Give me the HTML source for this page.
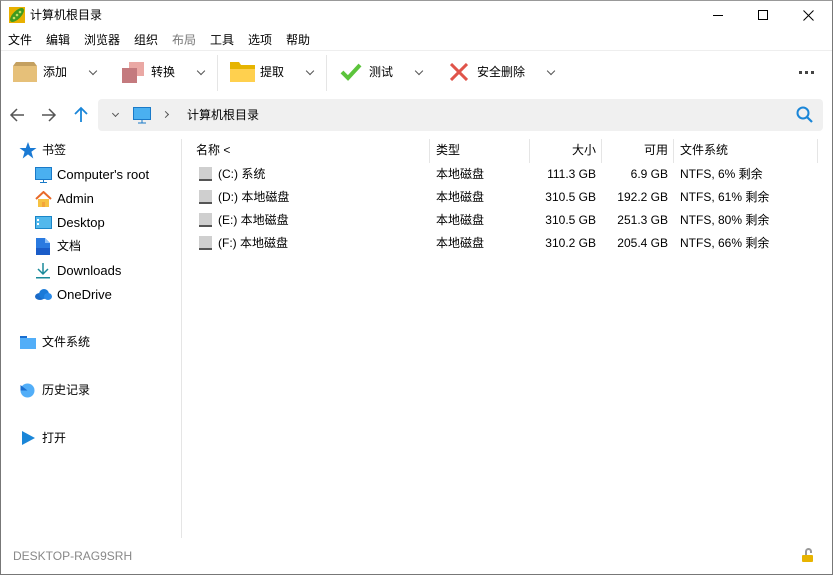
<!DOCTYPE html>
<html><head><meta charset="utf-8"><style>
*{margin:0;padding:0;box-sizing:border-box}
body{width:833px;height:575px;overflow:hidden;background:#fff;font-family:"Liberation Sans","Noto Sans CJK SC",sans-serif;font-size:12px;color:#000;position:relative}
.a{position:absolute;white-space:nowrap;line-height:17px}
.frame{position:absolute;left:0;top:0;width:833px;height:575px;border:1px solid #777;border-top-color:#999;pointer-events:none}
.sep{position:absolute;width:1px;background:#e5e5e5}
.chev{position:absolute;width:6px;height:6px;border-right:1.3px solid #555;border-bottom:1.3px solid #555;transform:rotate(45deg)}
.r{text-align:right}
</style></head><body>
<svg class="a" style="left:9px;top:7px" width="16" height="16"><rect width="16" height="16" fill="#e8b000"/><ellipse cx="8" cy="8" rx="9" ry="4" transform="rotate(-45 8 8)" fill="#3f9a1f"/><circle cx="5" cy="11" r="1.3" fill="#c8e060"/><circle cx="8" cy="8" r="1.3" fill="#c8e060"/><circle cx="11" cy="5" r="1.3" fill="#c8e060"/></svg>
<div class="a" style="left:30px;top:7px">计算机根目录</div>
<div class="a" style="left:713px;top:15px;width:10px;height:1px;background:#000"></div>
<div class="a" style="left:758px;top:10px;width:10px;height:10px;border:1px solid #000"></div>
<svg class="a" style="left:803px;top:10px" width="11" height="11"><path d="M0.5 0.5L10.5 10.5M10.5 0.5L0.5 10.5" stroke="#000" stroke-width="1"/></svg>
<div class="a" style="left:8px;top:32px">文件</div>
<div class="a" style="left:46px;top:32px">编辑</div>
<div class="a" style="left:84px;top:32px">浏览器</div>
<div class="a" style="left:134px;top:32px">组织</div>
<div class="a" style="left:172px;top:32px;color:#777">布局</div>
<div class="a" style="left:210px;top:32px">工具</div>
<div class="a" style="left:248px;top:32px">选项</div>
<div class="a" style="left:286px;top:32px">帮助</div>
<div class="a" style="left:1px;top:50px;width:831px;height:1px;background:#eee"></div>
<svg class="a" style="left:13px;top:62px" width="24" height="20"><path d="M0 4L3 0H21L24 4Z" fill="#c4a060"/><rect y="4" width="24" height="16" fill="#e6c079"/></svg>
<div class="a" style="left:43px;top:64px">添加</div>
<div class="chev" style="left:90px;top:68px"></div>
<div class="a" style="left:129px;top:62px;width:15px;height:14px;background:#eaa8a4"></div>
<div class="a" style="left:122px;top:68px;width:15px;height:15px;background:#c47a7e"></div>
<div class="a" style="left:151px;top:64px">转换</div>
<div class="chev" style="left:198px;top:68px"></div>
<div class="sep" style="left:217px;top:55px;height:36px"></div>
<svg class="a" style="left:230px;top:62px" width="25" height="20"><path d="M0 0H9L11 3H25V20H0Z" fill="#e6b400"/><rect y="7" width="25" height="13" fill="#ffd04e"/></svg>
<div class="a" style="left:260px;top:64px">提取</div>
<div class="chev" style="left:307px;top:68px"></div>
<div class="sep" style="left:326px;top:55px;height:36px"></div>
<svg class="a" style="left:340px;top:63px" width="22" height="18"><path d="M2 9L8 15L20 2" stroke="#5cc43c" stroke-width="4" fill="none"/></svg>
<div class="a" style="left:369px;top:64px">测试</div>
<div class="chev" style="left:416px;top:68px"></div>
<svg class="a" style="left:450px;top:63px" width="18" height="18"><path d="M1 1L17 17M17 1L1 17" stroke="#e0544a" stroke-width="3"/></svg>
<div class="a" style="left:477px;top:64px">安全删除</div>
<div class="chev" style="left:548px;top:68px"></div>
<svg class="a" style="left:799px;top:71px" width="17" height="4"><rect x="0" y="0" width="3" height="3" fill="#444"/><rect x="6" y="0" width="3" height="3" fill="#444"/><rect x="12" y="0" width="3" height="3" fill="#444"/></svg>
<svg class="a" style="left:9px;top:107px" width="16" height="16"><path d="M15 8H2M8 2L2 8L8 14" stroke="#555" stroke-width="1.5" fill="none"/></svg>
<svg class="a" style="left:41px;top:107px" width="16" height="16"><path d="M1 8H14M8 2L14 8L8 14" stroke="#555" stroke-width="1.5" fill="none"/></svg>
<svg class="a" style="left:73px;top:106px" width="16" height="17"><path d="M8 16V2M2 8L8 2L14 8" stroke="#1a86d8" stroke-width="1.8" fill="none"/></svg>
<div class="a" style="left:98px;top:99px;width:725px;height:32px;background:#f0f0f0;border-radius:4px"></div>
<div class="chev" style="left:113px;top:111px;width:5px;height:5px"></div>
<svg class="a" style="left:133px;top:107px" width="18" height="17"><rect x="0.5" y="0.5" width="17" height="12" fill="#4ab0f0" stroke="#1a7ac8"/><path d="M9 13V16M5 16H13" stroke="#1a7ac8"/></svg>
<div class="chev" style="left:163px;top:112px;width:5px;height:5px;transform:rotate(-45deg)"></div>
<div class="a" style="left:187px;top:107px">计算机根目录</div>
<svg class="a" style="left:796px;top:106px" width="18" height="18"><circle cx="7" cy="7" r="5.5" stroke="#1a86d8" stroke-width="2" fill="none"/><path d="M11 11L16 16" stroke="#1a86d8" stroke-width="2.2"/></svg>
<svg class="a" style="left:19px;top:142px" width="18" height="17"><path d="M9 0L11.2 6H17.5L12.4 9.8L14.3 16.5L9 12.4L3.7 16.5L5.6 9.8L0.5 6H6.8Z" fill="#1a7ad4"/></svg>
<div class="a" style="left:42px;top:142px">书签</div>
<svg class="a" style="left:35px;top:167px" width="17" height="16"><rect x="0.5" y="0.5" width="16" height="12" fill="#4ab0f0" stroke="#1a7ac8"/><path d="M8.5 13V15M5 15.5H12" stroke="#1a7ac8"/></svg>
<div class="a" style="left:57px;top:166px;font-size:13px">Computer's root</div>
<svg class="a" style="left:35px;top:191px" width="17" height="16"><path d="M1 8L8.5 1L16 8" stroke="#e86a2a" stroke-width="2" fill="none"/><rect x="3" y="8" width="11" height="8" fill="#f6c242"/><rect x="7" y="11" width="3" height="5" fill="#f3a43a"/></svg>
<div class="a" style="left:57px;top:190px;font-size:13px">Admin</div>
<svg class="a" style="left:35px;top:216px" width="17" height="13"><rect width="17" height="13" fill="#1a86c8"/><rect x="1" y="1" width="15" height="11" fill="#52b8ec"/><rect x="2" y="3" width="2" height="2" fill="#fff"/><rect x="2" y="7" width="2" height="2" fill="#fff"/></svg>
<div class="a" style="left:57px;top:214px;font-size:13px">Desktop</div>
<svg class="a" style="left:36px;top:238px" width="14" height="17"><path d="M0 0H9L14 5V17H0Z" fill="#2a7ae0"/><path d="M9 0V5H14" fill="#8cc0f8"/><rect y="10" width="14" height="7" fill="#1a5cc8"/></svg>
<div class="a" style="left:57px;top:238px">文档</div>
<svg class="a" style="left:36px;top:263px" width="14" height="16"><path d="M7 0V10M2 6L7 11L12 6" stroke="#1a8a9a" stroke-width="1.5" fill="none"/><rect y="14" width="14" height="1.5" fill="#1a8a9a"/></svg>
<div class="a" style="left:57px;top:262px;font-size:13px">Downloads</div>
<svg class="a" style="left:35px;top:289px" width="17" height="11"><ellipse cx="5" cy="7.5" rx="5" ry="3.5" fill="#1a6ac8"/><ellipse cx="9" cy="5" rx="5" ry="5" fill="#1a7ad8"/><ellipse cx="13" cy="7.5" rx="4" ry="3.5" fill="#2a8ae8"/></svg>
<div class="a" style="left:57px;top:286px;font-size:13px">OneDrive</div>
<svg class="a" style="left:20px;top:336px" width="16" height="13"><rect width="7" height="3" fill="#1a6ed0"/><rect y="2" width="16" height="11" fill="#52aef8"/></svg>
<div class="a" style="left:42px;top:334px">文件系统</div>
<svg class="a" style="left:20px;top:383px" width="15" height="15"><circle cx="7.5" cy="7.5" r="7" fill="#52aef8"/><path d="M0.5 2L7.5 7.5H0.5Z" fill="#1a6ed0"/></svg>
<div class="a" style="left:42px;top:382px">历史记录</div>
<svg class="a" style="left:22px;top:431px" width="13" height="14"><path d="M0 0L13 7L0 14Z" fill="#1a86d8"/></svg>
<div class="a" style="left:42px;top:430px">打开</div>
<div class="sep" style="left:181px;top:139px;height:399px"></div>
<div class="a" style="left:196px;top:142px">名称 &lt;</div>
<div class="sep" style="left:429px;top:139px;height:24px"></div>
<div class="a" style="left:436px;top:142px">类型</div>
<div class="sep" style="left:529px;top:139px;height:24px"></div>
<div class="a r" style="left:530px;top:142px;width:66px">大小</div>
<div class="sep" style="left:601px;top:139px;height:24px"></div>
<div class="a r" style="left:602px;top:142px;width:66px">可用</div>
<div class="sep" style="left:673px;top:139px;height:24px"></div>
<div class="a" style="left:680px;top:142px">文件系统</div>
<div class="sep" style="left:817px;top:139px;height:24px"></div>
<div class="a" style="left:199px;top:167px;width:13px;height:14px;background:#cfcfcf;border-bottom:2px solid #555"></div>
<div class="a" style="left:218px;top:166px">(C:) 系统</div><div class="a" style="left:436px;top:166px">本地磁盘</div><div class="a r" style="left:530px;top:166px;width:66px">111.3 GB</div><div class="a r" style="left:602px;top:166px;width:66px">6.9 GB</div><div class="a" style="left:680px;top:166px">NTFS, 6% 剩余</div>
<div class="a" style="left:199px;top:190px;width:13px;height:14px;background:#cfcfcf;border-bottom:2px solid #555"></div>
<div class="a" style="left:218px;top:189px">(D:) 本地磁盘</div><div class="a" style="left:436px;top:189px">本地磁盘</div><div class="a r" style="left:530px;top:189px;width:66px">310.5 GB</div><div class="a r" style="left:602px;top:189px;width:66px">192.2 GB</div><div class="a" style="left:680px;top:189px">NTFS, 61% 剩余</div>
<div class="a" style="left:199px;top:213px;width:13px;height:14px;background:#cfcfcf;border-bottom:2px solid #555"></div>
<div class="a" style="left:218px;top:212px">(E:) 本地磁盘</div><div class="a" style="left:436px;top:212px">本地磁盘</div><div class="a r" style="left:530px;top:212px;width:66px">310.5 GB</div><div class="a r" style="left:602px;top:212px;width:66px">251.3 GB</div><div class="a" style="left:680px;top:212px">NTFS, 80% 剩余</div>
<div class="a" style="left:199px;top:236px;width:13px;height:14px;background:#cfcfcf;border-bottom:2px solid #555"></div>
<div class="a" style="left:218px;top:235px">(F:) 本地磁盘</div><div class="a" style="left:436px;top:235px">本地磁盘</div><div class="a r" style="left:530px;top:235px;width:66px">310.2 GB</div><div class="a r" style="left:602px;top:235px;width:66px">205.4 GB</div><div class="a" style="left:680px;top:235px">NTFS, 66% 剩余</div>
<div class="a" style="left:13px;top:548px;color:#888;font-size:12px">DESKTOP-RAG9SRH</div>
<svg class="a" style="left:801px;top:548px" width="13" height="15"><path d="M5 7V3.5A2.5 2.5 0 0 1 10 3.5V5" stroke="#999" stroke-width="2" fill="none"/><rect x="1" y="7" width="11" height="7" rx="1" fill="#e8b400"/></svg>
<div class="frame"></div>
</body></html>
